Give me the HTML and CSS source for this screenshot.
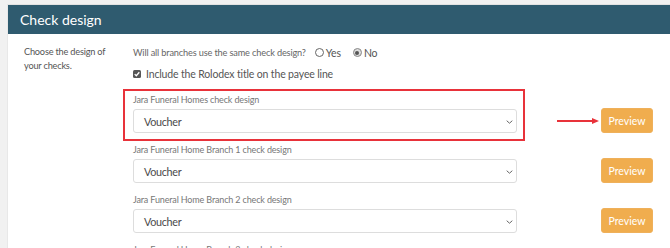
FILE: index.html
```html
<!DOCTYPE html>
<html>
<head>
<meta charset="utf-8">
<link rel="stylesheet" href="styles.css">
</head>
<body>
<div class="card">
  <div class="card-header">Check design</div>
  <div class="card-body">
    <div class="desc">Choose the design of your checks.</div>
    <div class="fields">
      <div class="question">
        <span class="q-text">Will all branches use the same check design?</span>
        <label class="radio"><span class="radio-dot"></span>Yes</label>
        <label class="radio"><span class="radio-dot checked"></span>No</label>
      </div>
      <div class="check-row">
        <span class="checkbox"><svg viewBox="0 0 8 8" width="8" height="8"><path d="M1.7 4.1 L3.3 5.7 L6.3 2.3" fill="none" stroke="#fff" stroke-width="1.3"/></svg></span>
        <span>Include the Rolodex title on the payee line</span>
      </div>
      <div class="design-row highlighted">
        <div class="design-group">
          <div class="design-label">Jara Funeral Homes check design</div>
          <div class="select"><span>Voucher</span><svg class="chev" viewBox="0 0 7 4" width="7" height="4"><path d="M0.7 0.7 L3.5 3.2 L6.3 0.7" fill="none" stroke="#666" stroke-width="1"/></svg></div>
        </div>
        <div class="arrow"><span class="arrow-line"></span><span class="arrow-head"></span></div>
        <button class="preview">Preview</button>
      </div>
      <div class="design-row">
        <div class="design-group">
          <div class="design-label">Jara Funeral Home Branch 1 check design</div>
          <div class="select"><span>Voucher</span><svg class="chev" viewBox="0 0 7 4" width="7" height="4"><path d="M0.7 0.7 L3.5 3.2 L6.3 0.7" fill="none" stroke="#666" stroke-width="1"/></svg></div>
        </div>
        <button class="preview">Preview</button>
      </div>
      <div class="design-row">
        <div class="design-group">
          <div class="design-label">Jara Funeral Home Branch 2 check design</div>
          <div class="select"><span>Voucher</span><svg class="chev" viewBox="0 0 7 4" width="7" height="4"><path d="M0.7 0.7 L3.5 3.2 L6.3 0.7" fill="none" stroke="#666" stroke-width="1"/></svg></div>
        </div>
        <button class="preview">Preview</button>
      </div>
      <div class="design-row">
        <div class="design-group">
          <div class="design-label">Jara Funeral Home Branch 3 check design</div>
        </div>
      </div>
    </div>
  </div>
</div>
</body>
</html>
```

FILE: styles.css
```css
html, body {
  margin: 0;
  padding: 0;
  height: 248px;
  overflow: hidden;
}
body {
  background: #f1f1f1;
  font-family: Lato, "Open Sans", sans-serif;
  color: #555;
}
.card {
  margin: 4px 0 0 7px;
  background: #fff;
  border-top: 1px solid #e2e2e2;
  border-left: 1px solid #e8e8e8;
  height: 260px;
}
.card-header {
  background: #2f5b6f;
  color: #fff;
  font-size: 14px;
  height: 29px;
  line-height: 29px;
  padding-left: 12px;
}
.card-body {
  display: flex;
  padding-top: 10px;
}
.desc {
  width: 92px;
  padding-left: 16px;
  font-size: 9.2px;
  letter-spacing: -0.2px;
  line-height: 14px;
  padding-top: 1px;
  color: #555;
}
.fields {
  margin-left: 17px;
  display: flex;
  flex-direction: column;
}
.question {
  display: flex;
  align-items: center;
  font-size: 9.2px;
  letter-spacing: -0.15px;
  height: 17px;
  color: #666;
}
.q-text { margin-right: 9px; }
.radio {
  display: flex;
  align-items: center;
  font-size: 10.5px;
  margin-right: 12px;
  color: #555;
}
.radio-dot {
  box-sizing: border-box;
  width: 9px;
  height: 9px;
  border: 1px solid #666;
  border-radius: 50%;
  margin-right: 2px;
  position: relative;
}
.radio-dot.checked {
  background: #ddd;
  border-color: #888;
}
.radio-dot.checked::after {
  content: "";
  position: absolute;
  left: 1.5px; top: 1.5px;
  width: 4px; height: 4px;
  border-radius: 50%;
  background: #555;
}
.check-row {
  display: flex;
  align-items: center;
  font-size: 10.5px;
  letter-spacing: -0.15px;
  margin-top: 4px;
  height: 18px;
  color: #555;
}
.checkbox {
  width: 8px;
  height: 8px;
  background: #555;
  border-radius: 1.5px;
  display: flex;
  align-items: center;
  justify-content: center;
  margin-right: 5px;
}
.design-row {
  display: flex;
  align-items: flex-end;
  margin-top: 10px;
  position: relative;
}
.design-row + .design-row { margin-top: 10px; }
.design-row.highlighted::before {
  content: "";
  position: absolute;
  left: -10px; top: -4px;
  width: 398px; height: 48px;
  border: 2px solid #e8323a;
  pointer-events: none;
}
.design-group { width: 384px; }
.design-label {
  font-size: 9px;
  letter-spacing: -0.15px;
  color: #777;
  height: 14px;
  line-height: 14px;
  margin-bottom: 2px;
}
.select {
  box-sizing: border-box;
  height: 24px;
  border: 1px solid #ddd;
  border-radius: 3px;
  display: flex;
  align-items: center;
  justify-content: space-between;
  padding: 0 3px 0 10px;
  font-size: 10.8px;
  letter-spacing: -0.3px;
  color: #4a4a4a;
}
.chev { margin-top: 1px; }
.arrow {
  width: 42px;
  margin-left: 40px;
  height: 24px;
  display: flex;
  align-items: center;
}
.arrow-line {
  flex: 1;
  height: 1.5px;
  background: #e8323a;
}
.arrow-head {
  width: 0; height: 0;
  border-left: 7px solid #e8323a;
  border-top: 3.5px solid transparent;
  border-bottom: 3.5px solid transparent;
}
.preview {
  box-sizing: border-box;
  background: #f0ad4e;
  border: 1px solid #efb05a;
  border-radius: 3px;
  color: #fff;
  font-family: inherit;
  font-size: 10.5px;
  height: 25px;
  width: 52px;
  padding: 0;
  margin-bottom: 0;
}
.design-row:not(.highlighted) .preview { margin-left: 84px; }
.highlighted .preview { margin-left: 2px; }
```
